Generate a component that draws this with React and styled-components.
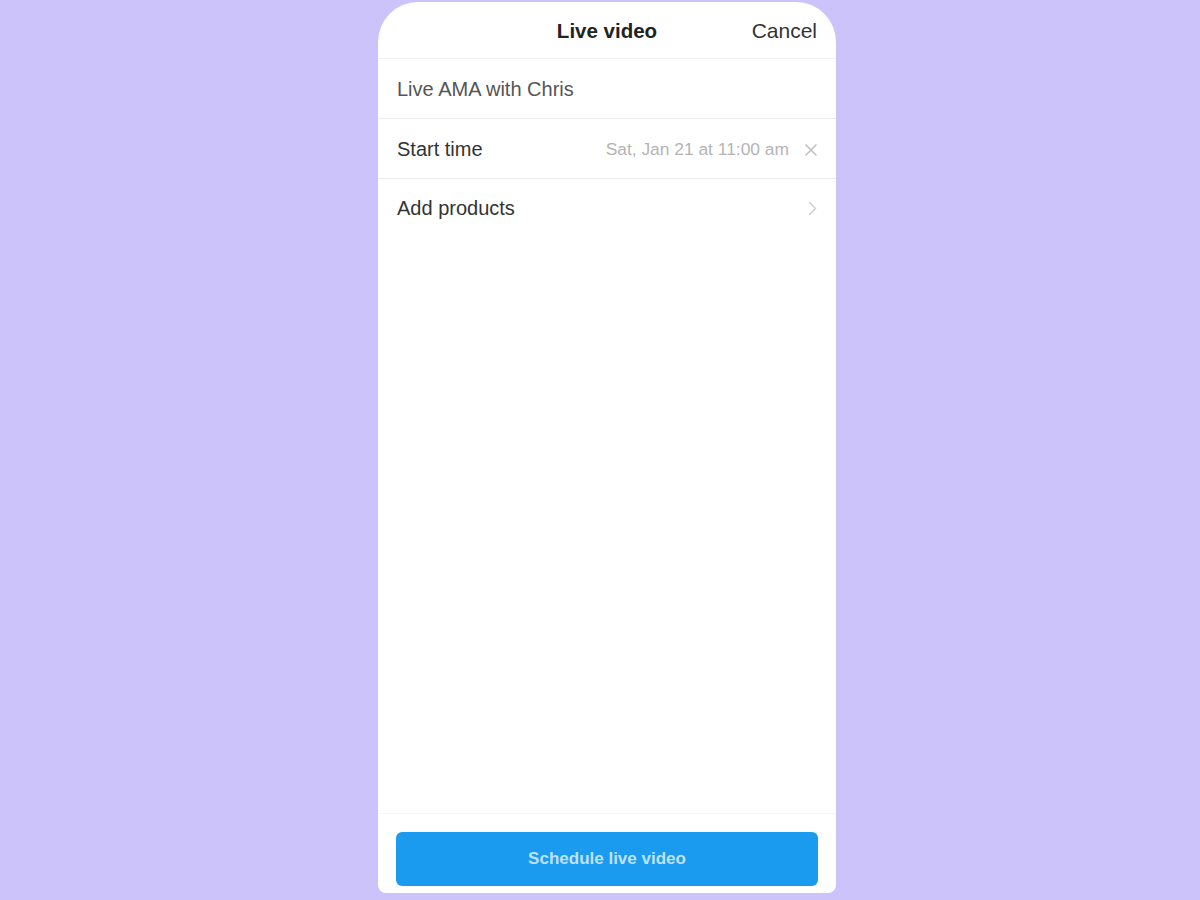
import React from "react";
import styled, { createGlobalStyle } from "styled-components";

const GlobalStyle = createGlobalStyle`
  html, body {
    margin: 0;
    padding: 0;
    background: #cbc3f9;
  }
  body {
    font-family: "Liberation Sans", Arial, sans-serif;
    color: #2b2b2b;
  }
`;

const Stage = styled.div`
  width: 1200px;
  height: 900px;
  display: flex;
  justify-content: center;
  align-items: flex-start;
  padding: 2px 0 0 14px;
  box-sizing: border-box;
`;

const Phone = styled.div`
  width: 458px;
  height: 891px;
  background: #fff;
  border-radius: 40px 40px 8px 8px;
  display: flex;
  flex-direction: column;
  overflow: hidden;
`;

const Header = styled.div`
  height: 57px;
  display: grid;
  grid-template-columns: 1fr auto 1fr;
  align-items: center;
  padding: 2px 19px 0;
  box-sizing: border-box;
  border-bottom: 1px solid #f1f1f1;
`;

const Title = styled.div`
  grid-column: 2;
  font-size: 20.5px;
  font-weight: 700;
  color: #222;
`;

const Cancel = styled.button`
  grid-column: 3;
  justify-self: end;
  border: 0;
  background: none;
  padding: 0;
  font: inherit;
  font-size: 21px;
  color: #333;
`;

const Row = styled.div`
  height: 60px;
  display: flex;
  align-items: center;
  padding: ${(p) => (p.$last ? "0 19px 2px" : "2px 19px 0")};
  box-sizing: border-box;
  border-bottom: ${(p) => (p.$last ? "none" : "1px solid #ececec")};
  font-size: 20px;
  color: ${(p) => (p.$muted ? "#555" : "#333")};
`;

const Label = styled.span`
  flex: 1;
`;

const Value = styled.span`
  font-size: 17.4px;
  color: #b4b4b4;
  margin-right: 16px;
`;

const Spacer = styled.div`
  flex: 1;
`;

const Footer = styled.div`
  border-top: 1px solid #f6f6f6;
  padding: 18px 18px 7px 18px;
`;

const ScheduleButton = styled.button`
  width: 100%;
  height: 54px;
  border: 0;
  border-radius: 6px;
  background: #1a9bef;
  color: #bfe2fc;
  font: inherit;
  font-size: 17px;
  font-weight: 700;
`;

const CloseIcon = () => (
  <svg width="12" height="12" viewBox="0 0 12 12" fill="none">
    <path d="M1 1L11 11M11 1L1 11" stroke="#bdbdbd" strokeWidth="1.5" strokeLinecap="round" />
  </svg>
);

const Chevron = () => (
  <svg width="9" height="15" viewBox="0 0 9 15" fill="none">
    <path d="M1.5 1.5L7.5 7.5L1.5 13.5" stroke="#d0d0d0" strokeWidth="1.6" strokeLinecap="round" strokeLinejoin="round" />
  </svg>
);

export default function App() {
  return (
    <>
      <GlobalStyle />
      <Stage>
        <Phone>
          <Header>
            <Title>Live video</Title>
            <Cancel>Cancel</Cancel>
          </Header>
          <Row $muted>
            <Label>Live AMA with Chris</Label>
          </Row>
          <Row>
            <Label>Start time</Label>
            <Value>Sat, Jan 21 at 11:00 am</Value>
            <CloseIcon />
          </Row>
          <Row $last>
            <Label>Add products</Label>
            <Chevron />
          </Row>
          <Spacer />
          <Footer>
            <ScheduleButton>Schedule live video</ScheduleButton>
          </Footer>
        </Phone>
      </Stage>
    </>
  );
}
